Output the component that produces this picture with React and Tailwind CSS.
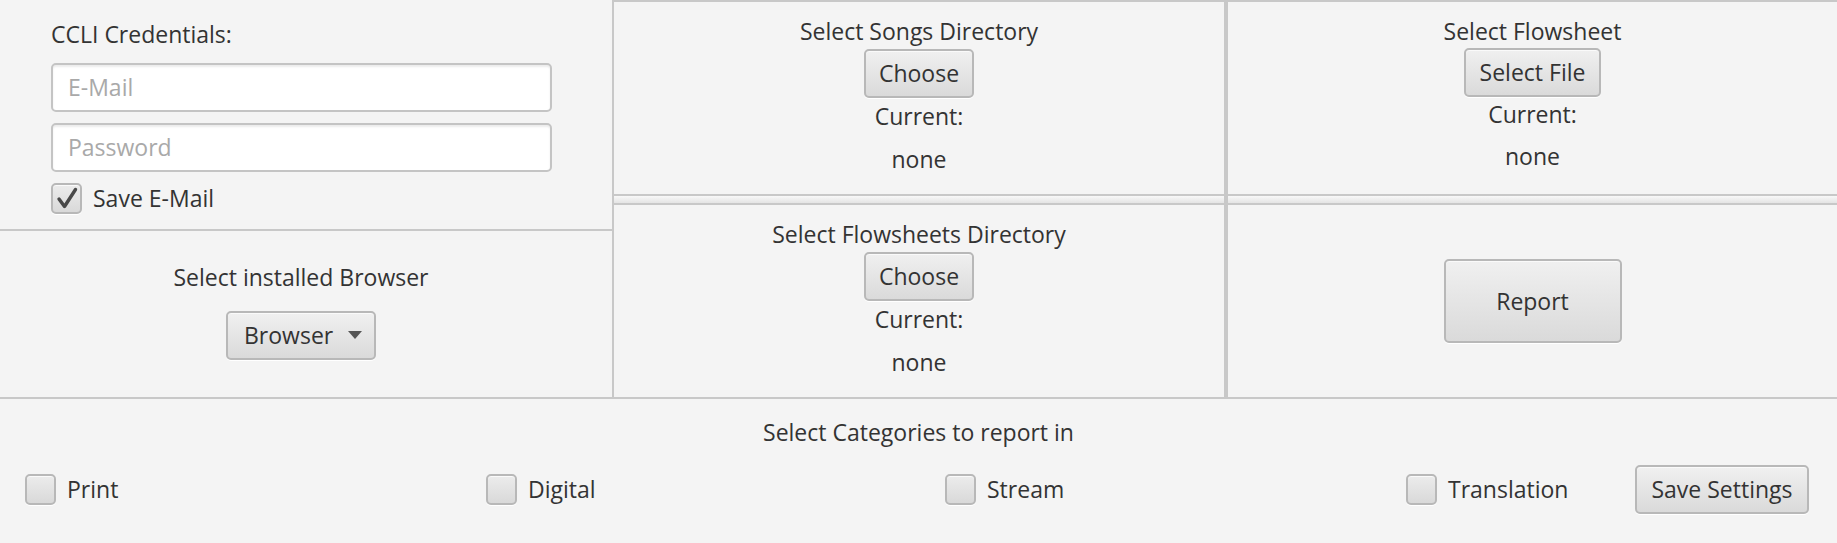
import React from "react";

const font = { fontFamily: '"Open Sans", "Noto Sans", sans-serif' };

function FxButton({ children, className = "" }) {
  return (
    <div
      className={
        "flex items-center justify-center rounded-[5px] border-2 border-[#b8b8b8] bg-gradient-to-b from-[#f0f0f0] to-[#dadada] text-[#333] shadow-[inset_0_1px_0_#fafafa,0_1px_0_#ffffff] " +
        className
      }
    >
      {children}
    </div>
  );
}

function FxCheck({ checked = false }) {
  return (
    <div className="flex h-[31px] w-[31px] shrink-0 items-center justify-center rounded-[5px] border-2 border-[#b8b8b8] bg-gradient-to-b from-[#ececec] to-[#d9d9d9] shadow-[inset_0_1px_0_#fafafa,0_1px_0_#ffffff]">
      {checked && (
        <svg width="22" height="22" viewBox="0 0 22 22">
          <path d="M3 12 L8.5 19.5 L19.5 2.5" fill="none" stroke="#484848" strokeWidth="3.4" strokeLinecap="round" strokeLinejoin="round" />
        </svg>
      )}
    </div>
  );
}

function FxField({ placeholder }) {
  return (
    <div className="flex h-[49px] w-[501px] items-center rounded-[5px] border-2 border-[#c4c4c4] bg-white pl-[15px] text-[#a9a9a9] shadow-[inset_0_2px_2px_#ececec]">
      {placeholder}
    </div>
  );
}

function Divider() {
  return (
    <div className="h-[11px] shrink-0 border-y-2 border-[#c8c8c8] bg-gradient-to-b from-[#f8f8f8] to-[#e4e4e4]" />
  );
}

function ChooserPanel({ title, button, className = "" }) {
  return (
    <div className={"flex flex-col items-center pt-[15px] leading-[29px] " + className}>
      <div>{title}</div>
      <FxButton className="mt-[3px] h-[49px] w-[110px]">{button}</FxButton>
      <div className="mt-[4px]">Current:</div>
      <div className="mt-[14px]">none</div>
    </div>
  );
}

export default function App() {
  return (
    <div style={font} className="flex h-[543px] w-[1837px] flex-col overflow-hidden bg-[#f4f4f4] text-[23px] text-[#333]">
      <div className="flex h-[399px] shrink-0 border-b-2 border-[#c8c8c8]">
        {/* left column */}
        <div className="flex w-[614px] shrink-0 flex-col border-r-2 border-[#c8c8c8]">
          <div className="flex h-[231px] shrink-0 flex-col border-b-2 border-[#c8c8c8] pl-[51px] pt-[20px]">
            <div className="leading-[29px]">CCLI Credentials:</div>
            <div className="mt-[14px]">
              <FxField placeholder="E-Mail" />
            </div>
            <div className="mt-[11px]">
              <FxField placeholder="Password" />
            </div>
            <div className="mt-[9px] flex items-center gap-[11px]">
              <FxCheck checked />
              <span>Save E-Mail</span>
            </div>
          </div>
          <div className="flex flex-1 flex-col items-center pr-[10px] pt-[32px]">
            <div className="leading-[29px]">Select installed Browser</div>
            <FxButton className="mt-[19px] h-[49px] w-[150px] !justify-start pl-[16px]">
              <span>Browser</span>
              <svg className="ml-[15px]" width="14" height="9" viewBox="0 0 14 9">
                <path d="M0 0 H14 L7 8 Z" fill="#555" />
              </svg>
            </FxButton>
          </div>
        </div>
        {/* middle column */}
        <div className="flex w-[612px] shrink-0 flex-col border-r-2 border-t-2 border-[#c8c8c8]">
          <ChooserPanel title="Select Songs Directory" button="Choose" className="h-[192px] shrink-0" />
          <Divider />
          <ChooserPanel title="Select Flowsheets Directory" button="Choose" className="flex-1" />
        </div>
        {/* right column */}
        <div className="flex flex-1 flex-col border-l-2 border-t-2 border-[#c8c8c8]">
          <div className="flex h-[192px] shrink-0 flex-col items-center pt-[15px] leading-[29px]">
            <div>Select Flowsheet</div>
            <FxButton className="mt-[2px] h-[49px] w-[137px]">Select File</FxButton>
            <div className="mt-[3px]">Current:</div>
            <div className="mt-[13px]">none</div>
          </div>
          <Divider />
          <div className="flex flex-1 items-center justify-center">
            <FxButton className="h-[84px] w-[178px]">Report</FxButton>
          </div>
        </div>
      </div>
      {/* bottom row */}
      <div className="flex flex-1 flex-col">
        <div className="pt-[19px] text-center leading-[29px]">Select Categories to report in</div>
        <div className="mt-[18px] flex items-center pl-[25px]">
          <div className="flex w-[461px] shrink-0 items-center gap-[11px]">
            <FxCheck />
            <span>Print</span>
          </div>
          <div className="flex w-[459px] shrink-0 items-center gap-[11px]">
            <FxCheck />
            <span>Digital</span>
          </div>
          <div className="flex w-[461px] shrink-0 items-center gap-[11px]">
            <FxCheck />
            <span>Stream</span>
          </div>
          <div className="flex w-[229px] shrink-0 items-center gap-[11px]">
            <FxCheck />
            <span>Translation</span>
          </div>
          <FxButton className="h-[49px] w-[174px]">Save Settings</FxButton>
        </div>
      </div>
    </div>
  );
}
